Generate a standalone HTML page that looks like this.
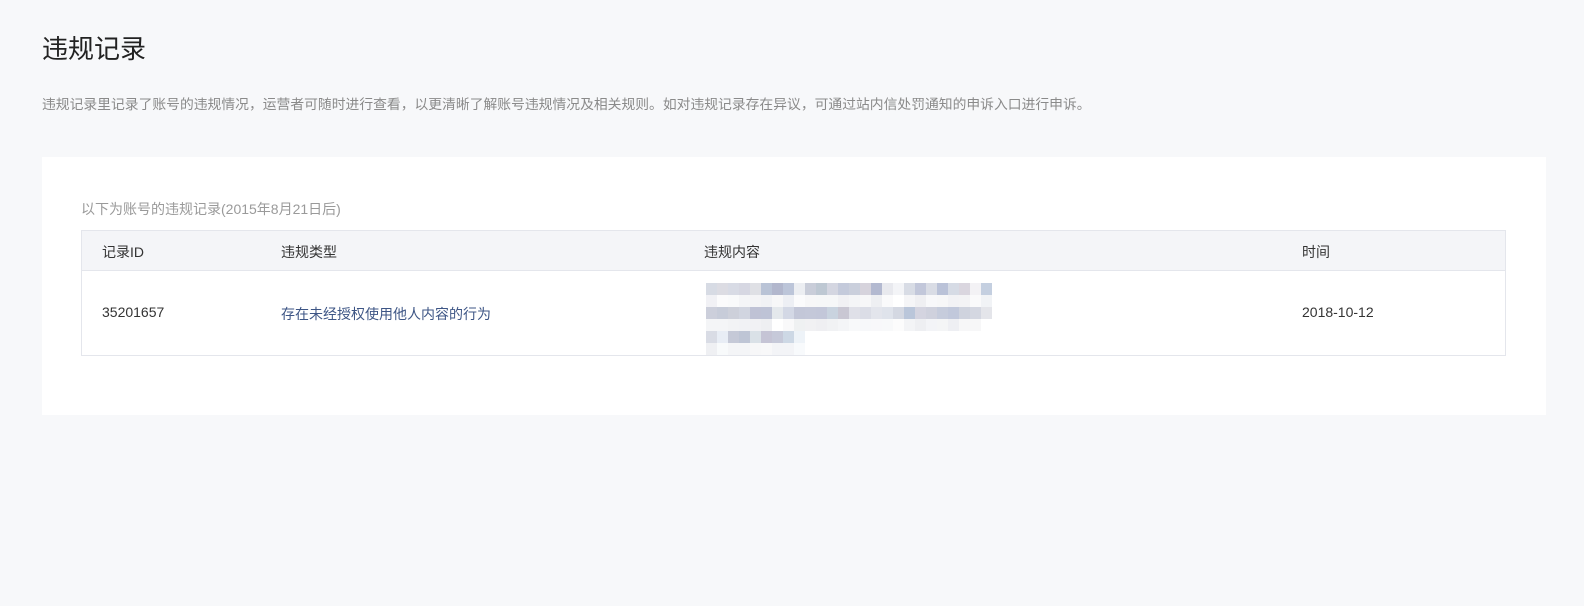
<!DOCTYPE html>
<html><head><meta charset="utf-8"><style>
*{margin:0;padding:0;box-sizing:border-box}
body{width:1584px;height:606px;background:#f7f8fa;font-family:"Liberation Sans","Noto Sans CJK SC",sans-serif;position:relative;overflow:hidden}
.a{position:absolute;white-space:nowrap}
.card{position:absolute;left:42px;top:157px;width:1504px;height:258px;background:#fff}
.tbl{position:absolute;left:81px;top:230px;width:1425px;height:126px;border:1px solid #e4e6ec}
.hd{position:absolute;left:0;top:0;right:0;height:40px;background:#f4f5f8;border-bottom:1px solid #e4e6ec}
.px{position:absolute;display:flex}
.px i{display:block;width:11px;height:12px;flex:none}
</style></head><body>
<div class="a" style="left:42px;top:29px;font-size:26px;color:#222">违规记录</div>
<div class="a" style="left:42px;top:93px;font-size:13.8px;color:#8a8a8a">违规记录里记录了账号的违规情况，运营者可随时进行查看，以更清晰了解账号违规情况及相关规则。如对违规记录存在异议，可通过站内信处罚通知的申诉入口进行申诉。</div>
<div class="card"></div>
<div class="a" style="left:81px;top:199px;font-size:14px;color:#9a9a9a">以下为账号的违规记录(2015年8月21日后)</div>
<div class="tbl"><div class="hd"></div></div>
<div class="a" style="left:102px;top:242px;font-size:14px;color:#333">记录ID</div>
<div class="a" style="left:281px;top:242px;font-size:14px;color:#333">违规类型</div>
<div class="a" style="left:704px;top:242px;font-size:14px;color:#333">违规内容</div>
<div class="a" style="left:1302px;top:242px;font-size:14px;color:#333">时间</div>
<div class="a" style="left:102px;top:304px;font-size:14px;color:#333">35201657</div>
<div class="a" style="left:281px;top:304px;font-size:14px;color:#3d5585">存在未经授权使用他人内容的行为</div>
<div class="a" style="left:1302px;top:304px;font-size:14px;color:#333">2018-10-12</div>
<div class="px" style="left:706px;top:283px"><i style="background:#d7dbe4"></i><i style="background:#dcdce3"></i><i style="background:#d8dbe5"></i><i style="background:#d6d7e2"></i><i style="background:#dfe0e5"></i><i style="background:#b9c3d6"></i><i style="background:#b2b7cd"></i><i style="background:#bcc5d9"></i><i style="background:#eceef2"></i><i style="background:#c9cdd9"></i><i style="background:#bec8d3"></i><i style="background:#d4d6e1"></i><i style="background:#c4cadb"></i><i style="background:#cacfdc"></i><i style="background:#d6d3dc"></i><i style="background:#b3b9d0"></i><i style="background:#e8e9ee"></i><i style="background:#f3f4f7"></i><i style="background:#d8dce5"></i><i style="background:#c2c7da"></i><i style="background:#d9dce5"></i><i style="background:#bac2d8"></i><i style="background:#d6dbe5"></i><i style="background:#dad6df"></i><i style="background:#f3f2f5"></i><i style="background:#c4cfe0"></i></div>
<div class="px" style="left:706px;top:295px;opacity:.6"><i style="background:#e8e9ef"></i><i style="background:#f9fafb"></i><i style="background:#f6f7f9"></i><i style="background:#eeeff3"></i><i style="background:#eeeef1"></i><i style="background:#e9eaef"></i><i style="background:#f2f3f5"></i><i style="background:#e2e5ed"></i><i style="background:#f9fafb"></i><i style="background:#f3f3f5"></i><i style="background:#f1f2f5"></i><i style="background:#f1f2f5"></i><i style="background:#e8e9ee"></i><i style="background:#eeeff3"></i><i style="background:#f2f2f4"></i><i style="background:#e4e5ea"></i><i style="background:#f7f7f9"></i><i style="background:#fff"></i><i style="background:#f0f0f3"></i><i style="background:#e5e6eb"></i><i style="background:#f4f4f7"></i><i style="background:#f2f2f5"></i><i style="background:#eaebf0"></i><i style="background:#ececf0"></i><i style="background:#f8f8f9"></i><i style="background:#e9ecf1"></i></div>
<div class="px" style="left:706px;top:307px"><i style="background:#cccfdb"></i><i style="background:#c7ccd9"></i><i style="background:#cdd0da"></i><i style="background:#d1d5e0"></i><i style="background:#bfc2d5"></i><i style="background:#bec3d6"></i><i style="background:#e4e8ec"></i><i style="background:#d3d8e5"></i><i style="background:#c3c7d8"></i><i style="background:#c4c8d9"></i><i style="background:#c3c7d9"></i><i style="background:#c9d3df"></i><i style="background:#c9c7d3"></i><i style="background:#dfe0e8"></i><i style="background:#dbdde6"></i><i style="background:#e3e5ec"></i><i style="background:#dfe3eb"></i><i style="background:#d4d8e2"></i><i style="background:#bac6da"></i><i style="background:#d4d4e0"></i><i style="background:#cfd1dd"></i><i style="background:#c6ccdc"></i><i style="background:#c1c8db"></i><i style="background:#cfd3de"></i><i style="background:#d4d7e1"></i><i style="background:#e4e5ea"></i></div>
<div class="px" style="left:706px;top:319px;opacity:.6"><i style="background:#eeeff3"></i><i style="background:#eeeff3"></i><i style="background:#ebecf0"></i><i style="background:#e9eaef"></i><i style="background:#e8e9ee"></i><i style="background:#e4e6eb"></i><i style="background:#fff"></i><i style="background:#f6f6f8"></i><i style="background:#e6e8ea"></i><i style="background:#e9e9ec"></i><i style="background:#e6e6eb"></i><i style="background:#e9eaee"></i><i style="background:#eeeff2"></i><i style="background:#f5f6f8"></i><i style="background:#f3f4f7"></i><i style="background:#f4f5f8"></i><i style="background:#f5f6f8"></i><i style="background:#fbfbfb"></i><i style="background:#ecedf1"></i><i style="background:#e4e5eb"></i><i style="background:#eceef2"></i><i style="background:#eeeff1"></i><i style="background:#e3e6ec"></i><i style="background:#f2f3f5"></i><i style="background:#f2f3f5"></i></div>
<div class="px" style="left:706px;top:331px"><i style="background:#d9dce5"></i><i style="background:#e8edf5"></i><i style="background:#c5c9d7"></i><i style="background:#bec5d5"></i><i style="background:#dae1e7"></i><i style="background:#c5c4d5"></i><i style="background:#c6c9d9"></i><i style="background:#cdd8e5"></i><i style="background:#eef3f8"></i></div>
<div class="px" style="left:706px;top:343px;opacity:.6"><i style="background:#e5e7ec"></i><i style="background:#f5f7fa"></i><i style="background:#eeeff3"></i><i style="background:#eeeff3"></i><i style="background:#f2f3f5"></i><i style="background:#f4f4f6"></i><i style="background:#eceef2"></i><i style="background:#eceef2"></i><i style="background:#f5f8fb"></i></div>
</body></html>
